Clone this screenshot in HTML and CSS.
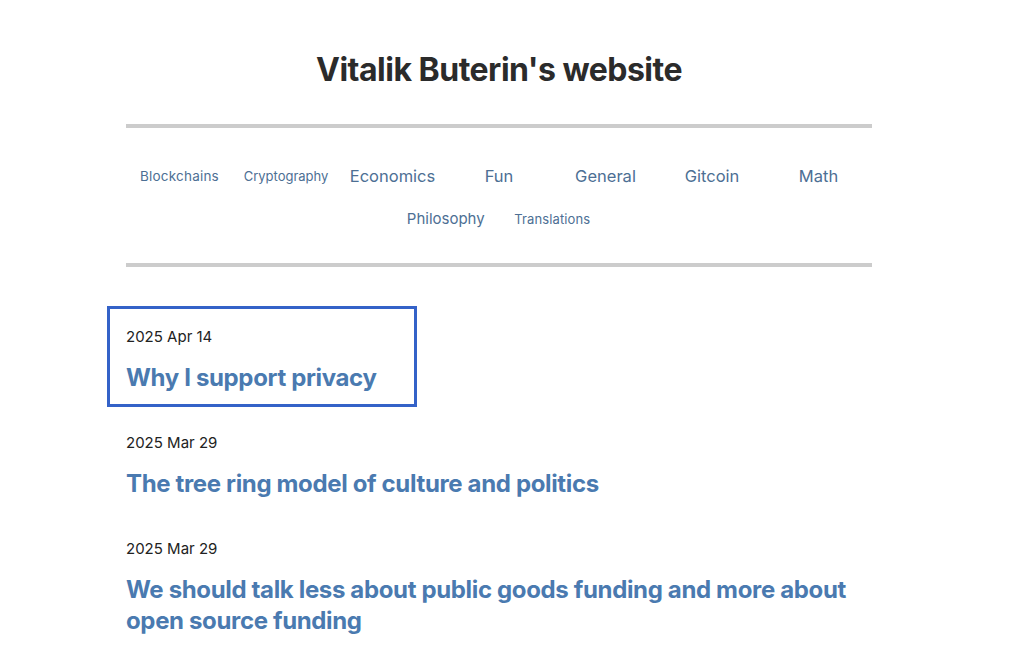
FILE: index.html
```html
<!DOCTYPE html>
<html lang="en">
<head>
    <meta charset="UTF-8">
    <meta name="viewport" content="width=device-width, initial-scale=1.0">
    <title>Vitalik Buterin's website</title>
    <link rel="stylesheet" href="styles.css">
</head>
<body>
    <div class="page">
        <h1 class="site-title">Vitalik Buterin's website</h1>

        <hr class="rule">

        <!-- Категории -->
        <nav class="categories">
            <a href="#" class="cat cat-small">Blockchains</a>
            <a href="#" class="cat cat-crypto">Cryptography</a>
            <a href="#" class="cat cat-large">Economics</a>
            <a href="#" class="cat cat-large">Fun</a>
            <a href="#" class="cat cat-large">General</a>
            <a href="#" class="cat cat-large">Gitcoin</a>
            <a href="#" class="cat cat-large">Math</a>
            <a href="#" class="cat cat-mid">Philosophy</a>
            <a href="#" class="cat cat-tiny">Translations</a>
        </nav>

        <hr class="rule">

        <!-- Список постов -->
        <div class="posts">
            <a href="#" class="post focused">
                <span class="post-date">2025 Apr 14</span>
                <span class="post-title">Why I support privacy</span>
            </a>
            <a href="#" class="post">
                <span class="post-date">2025 Mar 29</span>
                <span class="post-title">The tree ring model of culture and politics</span>
            </a>
            <a href="#" class="post">
                <span class="post-date">2025 Mar 29</span>
                <span class="post-title">We should talk less about public goods funding and more about open source funding</span>
            </a>
        </div>
    </div>
</body>
</html>
```

FILE: styles.css
```css
body {
    margin: 0;
    padding: 0;
    background: #ffffff;
    font-family: 'Inter', 'Liberation Sans', sans-serif;
    color: #222;
}

.page {
    width: 746px;
    margin-left: 126px;
    padding-top: 47px;
}

.site-title {
    margin: 0;
    text-align: center;
    font-size: 32px;
    font-weight: 700;
    letter-spacing: -0.5px;
    color: #2b2b2b;
    line-height: 46px;
}

.rule {
    border: none;
    height: 4px;
    background: #cccccc;
    margin: 31px 0 0;
}

.categories {
    display: flex;
    flex-wrap: wrap;
    justify-content: center;
    padding: 26px 0 23px;
}

.categories + .rule {
    margin-top: 0;
}

.cat {
    width: 106.5px;
    height: 43px;
    display: flex;
    align-items: center;
    justify-content: center;
    color: #4d6f94;
    text-decoration: none;
}

.cat-small {
    font-size: 13.5px;
    letter-spacing: 0.2px;
}

.cat-crypto {
    font-size: 13px;
    letter-spacing: 0;
}

.cat-tiny {
    font-size: 13px;
    letter-spacing: 0.1px;
}

.cat-mid {
    font-size: 15px;
}

.cat-large {
    font-size: 16.5px;
}

.posts {
    display: flex;
    flex-direction: column;
    align-items: flex-start;
    padding-top: 39px;
    margin-right: -40px;
}

.post {
    display: flex;
    flex-direction: column;
    text-decoration: none;
    padding: 18px 37px 11px 16px;
    margin-left: -19px;
    margin-bottom: 5px;
    border: 3px solid transparent;
}

.post.focused {
    border-color: #3462c8;
}

.post-date {
    font-size: 15px;
    letter-spacing: 0;
    color: #222;
    line-height: 20px;
}

.post-title {
    margin-top: 15px;
    font-size: 24px;
    font-weight: 700;
    letter-spacing: -0.35px;
    line-height: 31px;
    color: #4a7ab0;
}
```
